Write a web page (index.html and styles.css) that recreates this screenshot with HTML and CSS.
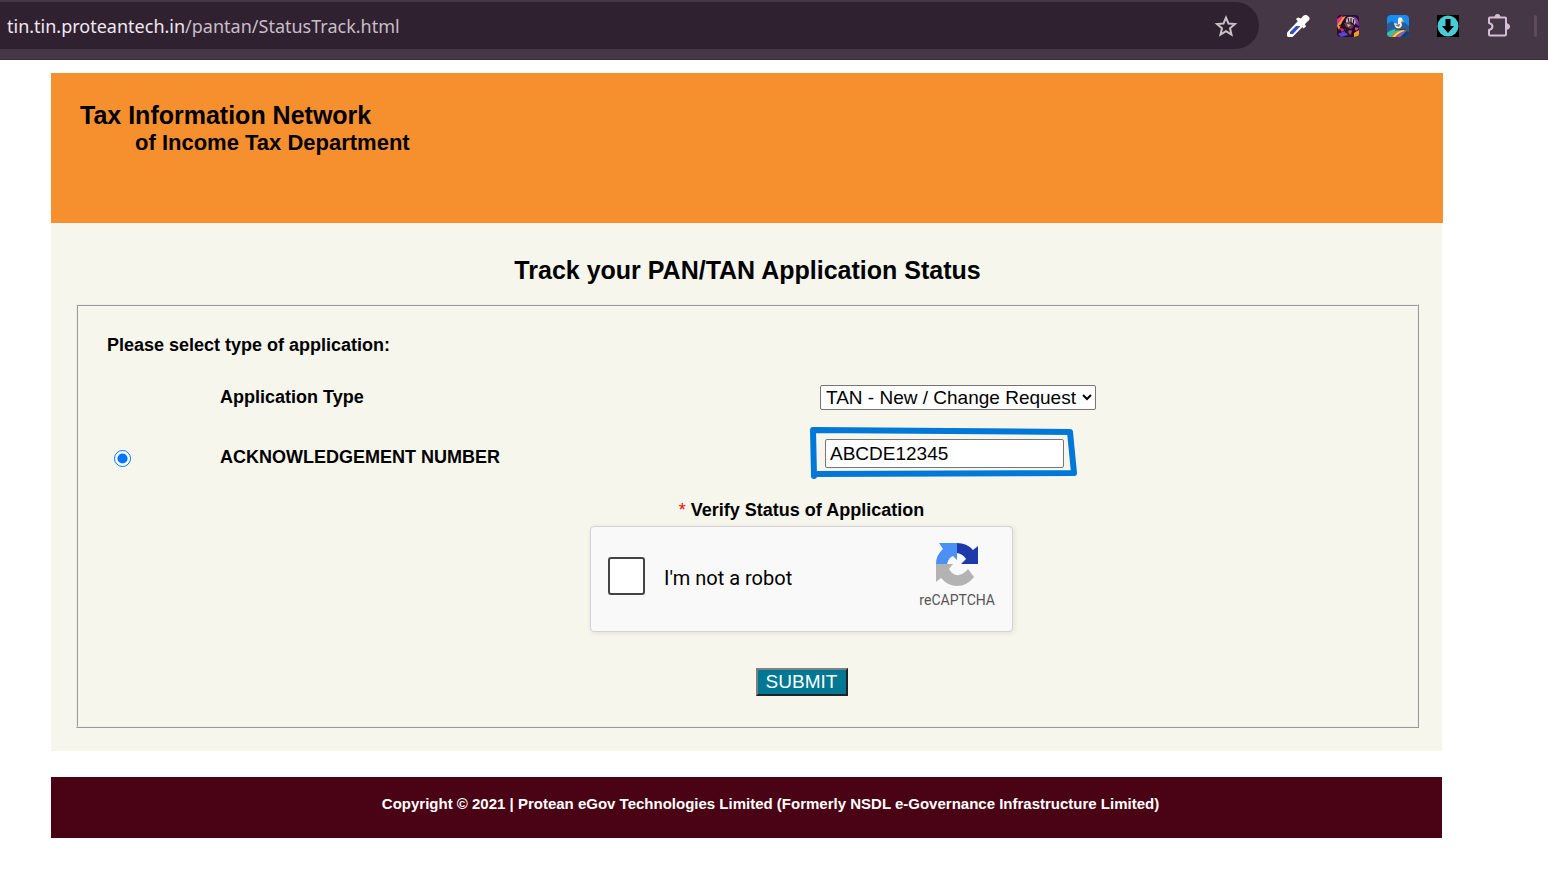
FILE: index.html
```html
<!DOCTYPE html>
<html lang="en">
<head>
<meta charset="utf-8">
<title>Track your PAN/TAN Application Status</title>
<link rel="stylesheet" href="styles.css">
</head>
<body>
<div class="browser">
  <div class="address">
    <span class="url"><span class="host">tin.tin.proteantech.in</span>/pantan/StatusTrack.html</span>
    <button class="tool star" aria-label="Bookmark this page">
      <svg width="24" height="24" viewBox="0 0 24 24" fill="none" stroke="#c9c2c8" stroke-width="2"><path d="M12 3.600l2.500 6 6.400.5-4.900 4.200 1.500 6.300-5.500-3.400-5.500 3.400L8 14.300l-4.900-4.200 6.400-.5z"/></svg>
    </button>
  </div>
  <div class="tools">
    <button class="tool" aria-label="Colour picker">
      <svg width="24" height="24" viewBox="0 0 24 24"><path d="M1 18.500L12 7l5.500 5L6.500 23H2l-1-1z" fill="#fff"/><path d="M4 18l6-6h4.500l-7.500 8H4z" fill="#3050c0"/><path d="M10 5l2-1.500 3 1L17 2q3-2 5.500.5T22 7l-3 3 1 2.500-2.500 2z" fill="#fff"/></svg>
    </button>
    <button class="tool" aria-label="Game extension">
      <svg width="24" height="24" viewBox="0 0 24 24"><defs><clipPath id="c1"><rect x="1" y="1" width="22" height="22" rx="4"/></clipPath></defs><g clip-path="url(#c1)"><rect width="24" height="24" fill="#251030"/><path d="M1 12Q2 3 10 2L6 8l-3 8z" fill="#f69a22"/><path d="M1 5l6-4-2 5-4 5z" fill="#e62c9b"/><path d="M17 2q6 2 6 10l-4-3z" fill="#8b38b8"/><path d="M10 6q1-4 6-3 5 2 3 8l-4-3-5 1z" fill="#cbb6b0"/><path d="M8 9l5-1 5 4-3 3-5-2z" fill="#634052"/><path d="M11 10l4 1-3 2z" fill="#f4b090"/><path d="M3 14l7 1-4 3z" fill="#dc276c"/><path d="M2 20l7-3 3 4-7 2z" fill="#5a45dc"/><path d="M13 16l4 1-3 4-2-3z" fill="#b84448"/><path d="M18 13l5 1-3 3z" fill="#ec35b4"/><path d="M18 19l5-3v6l-5 1z" fill="#f4a01f"/><path d="M7 13l3 6M12 4l1 4M15 4v5M18 5l-1 5M19 12l-3 7M3 12l5-3" fill="none" stroke="#120817"/></g></svg>
    </button>
    <button class="tool" aria-label="Surf extension">
      <svg width="24" height="24" viewBox="0 0 24 24"><defs><clipPath id="c2"><rect x="1" y="1" width="22" height="22" rx="4"/></clipPath></defs><g clip-path="url(#c2)"><rect width="24" height="24" fill="#168df0"/><path d="M1 10l5-3 6 6 6-5 5 4v12H1z" fill="#245f9b"/><path d="M1 19q6-5 15-4L6 24H1z" fill="#36bfa0"/><path d="M4 24q4-7 14-8l3 1-9 7z" fill="#f26b2e"/><path d="M7 24q4-6 11-7" fill="none" stroke="#ffda38" stroke-width="2"/><path d="M10 24q4-5 9-6" fill="none" stroke="#7b58db" stroke-width="2"/><path d="M14 24l6-7 3 1v6z" fill="#163f72"/><path d="M12 5q1-3 4-1l1 3-2 1 1 3q-1 4-5 3-2 0-3-5l4 1z" fill="#f7eee3"/><path d="M9 11l5-1-1 3z" fill="#a45b38"/><path d="M16 6l3 1-3 1z" fill="#f7a421"/><path d="M9 16l11-1" stroke="#493548"/></g></svg>
    </button>
    <button class="tool" aria-label="Downloader">
      <svg width="24" height="24" viewBox="0 0 24 24"><path d="M1 1h22v22H1z" fill="#000"/><circle cx="12" cy="12" r="10.500" fill="#4accd4"/><path d="M9.500 5h5v7H18l-6 7-6-7h3.500z" fill="#000"/></svg>
    </button>
    <button class="tool" aria-label="Extensions">
      <svg width="24" height="24" viewBox="0 0 24 24" fill="none" stroke="#d5bdd3" stroke-width="2" stroke-linejoin="round"><path d="M4 3.500h15q1 0 1 1V20.500q0 1-1 1H4q-1 0-1-1V16q3.500-1 3.500-3.500T3 9V4.500q0-1 1-1z"/><path d="M8.500 3.500q0-3.500 3-3.500t3 3.500zM20 9q4 .5 4 3.500t-4 3.500z" fill="#d5bdd3" stroke="none"/></svg>
    </button>
    <span class="divider"></span>
  </div>
</div>
<div class="page">
  <header class="banner">
    <div class="brand">Tax Information Network</div>
    <div class="department">of Income Tax Department</div>
  </header>
  <main class="content">
    <h1>Track your PAN/TAN Application Status</h1>
    <form class="frame">
      <div class="panel">
        <p class="prompt">Please select type of application:</p>
        <div class="row">
          <label class="name" for="type">Application Type</label>
          <div class="field"><select id="type"><option>TAN - New / Change Request</option></select></div>
        </div>
        <div class="row ack-row">
          <input class="pick" type="radio" id="by-ack" name="mode" checked>
          <label class="name" for="by-ack">ACKNOWLEDGEMENT NUMBER</label>
          <div class="field ack">
            <input class="number" type="text" aria-label="Acknowledgement number" value="ABCDE12345">
            <svg class="marker" width="272" height="54" viewBox="0 0 272 54" fill="none" stroke="#0078d7" stroke-width="6" stroke-linejoin="round" stroke-linecap="round"><path d="M6 50L5 4l257 2 4 41-260 1"/></svg>
          </div>
        </div>
        <div class="verify">
          <p class="caption"><span class="required">*</span> Verify Status of Application</p>
          <div class="captcha">
            <input class="box" type="checkbox" id="robot">
            <label class="robot" for="robot">I'm not a robot</label>
            <div class="badge">
              <svg width="44" height="44" viewBox="0 0 44 44"><path d="M22 1v17l-4-4q-4 1-6 8H1Q1 13 8 7L4 1z" fill="#4a90f5"/><path d="M22 1q10 0 16 7l5-4v18H26l5-5q-3-5-9-6z" fill="#1c3aa9"/><path d="M1 22h17l-4 5q4 7 10 6 5-1 9-6l6 8q-7 9-17 9-9 0-16-8l-5 4z" fill="#b3b3b3"/></svg>
              <span>reCAPTCHA</span>
            </div>
          </div>
          <button class="submit" type="submit">SUBMIT</button>
        </div>
      </div>
    </form>
  </main>
  <footer class="footer">Copyright © 2021 | Protean eGov Technologies Limited (Formerly NSDL e-Governance Infrastructure Limited)</footer>
</div>
</body>
</html>
```
FILE: styles.css
```css
* { box-sizing: border-box; }
body { margin: 0; background: #fff; color: #000; font-family: "Liberation Sans", Arial, sans-serif; }
h1, p { margin: 0; }
.browser { display: flex; align-items: flex-start; height: 60px; padding-top: 2px; background: #463747; border-bottom: 1px solid #3c2e3d; }
.address { display: flex; flex: 1; align-items: center; justify-content: space-between; height: 47px; padding: 0 21px 0 7px; background: #302130; border-radius: 0 24px 24px 0; }
.url { color: #c8bec8; font: 18px/28px "Noto Sans", "Open Sans", sans-serif; }
.host { color: #f0e8f0; }
.tool { width: 24px; height: 24px; padding: 0; background: none; border: 0; }
.tool svg { display: block; }
.tools { display: flex; align-items: center; gap: 26px; height: 47px; padding: 0 11px 0 27px; }
.divider { width: 3px; height: 22px; margin-left: -2px; background: #5d4a60; border-radius: 2px; }
.page { padding: 13px 106px 39px 51px; }
.banner { height: 150px; margin-right: -1px; padding: 28px 29px; background: #f6902e; font-weight: bold; }
.brand { font-size: 25px; line-height: 28px; }
.department { padding-left: 55px; font-size: 22px; line-height: 27px; }
.content { padding: 32px 23px 23px 25px; background: #f6f6ec; }
h1 { font-size: 25px; line-height: 30px; text-align: center; }
.frame { margin-top: 19px; border: 1px solid; border-color: #eee #999 #999 #eee; }
.panel { padding: 28px 29px 30px; border: 1px solid; border-color: #999 #eee #eee #999; }
.prompt { font-size: 18px; line-height: 22px; font-weight: bold; }
.row { display: grid; grid-template-columns: 113px 600px 1fr; align-items: center; height: 32px; margin-top: 25px; }
.row .name { grid-column: 2; font-size: 18px; font-weight: bold; }
.row .field { grid-column: 3; }
.ack-row { margin-top: 26px; }
.pick { width: 17px; height: 17px; margin: 2px 0 0 7px; accent-color: #0075ff; }
select { height: 25px; width: 276px; padding: 0 0 0 1px; color: #000; background: #fff; border: 1px solid #767676; border-radius: 2px; font: 19px "Liberation Sans", sans-serif; }
.ack { position: relative; padding-left: 5px; }
.number { display: block; width: 239px; height: 29px; margin-bottom: 7px; padding: 1px 4px; color: #000; background: #fff; border: 1px solid #767676; border-radius: 2px; font: 19px "Liberation Sans", sans-serif; }
.marker { position: absolute; left: -12px; top: -13px; pointer-events: none; }
.verify { display: flex; flex-direction: column; align-items: center; margin-top: 28px; padding-left: 108px; }
.caption { font-size: 18px; line-height: 22px; font-weight: bold; }
.required { color: #f00; font-weight: normal; }
.captcha { display: flex; align-items: center; width: 423px; height: 106px; margin-top: 5px; padding: 0 17px 6px; background: #f9f9f9; border: 1px solid #d3d3d3; border-radius: 4px; box-shadow: 1px 1px 4px 1px #0001; font-family: Roboto, sans-serif; }
.box { appearance: none; width: 37px; height: 38px; margin: 0; background: #fff; border: 2px solid #444; border-radius: 3px; }
.robot { flex: 1; padding: 4px 0 0 19px; font-size: 20px; }
.badge { display: flex; flex-direction: column; align-items: center; color: #555; font-size: 14px; line-height: 20px; }
.badge span { margin-top: 4px; }
.submit { height: 28px; width: 92px; margin-top: 36px; padding: 0; color: #fff; background: #007893; border: 2px solid; border-color: #808080 #222 #222 #808080; font: 19px "Liberation Sans", sans-serif; }
.footer { margin-top: 26px; padding: 17px 0 24px 48px; color: #fff; background: #4a0314; font-size: 15px; font-weight: bold; line-height: 20px; text-align: center; }
```
